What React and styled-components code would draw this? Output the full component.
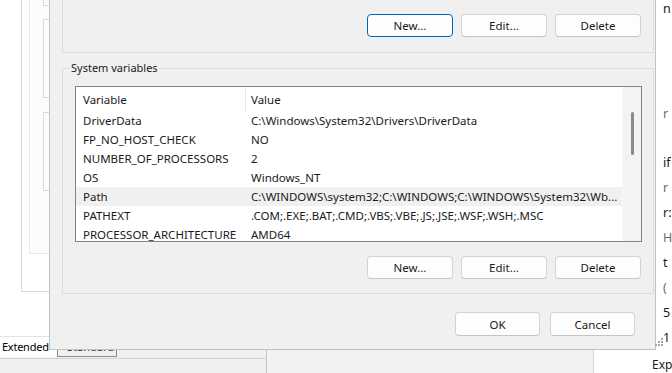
import React from 'react'
import styled, { createGlobalStyle } from 'styled-components'

const GlobalStyle = createGlobalStyle`
  html, body {
    margin: 0;
    padding: 0;
  }
  body {
    font-family: "Noto Sans", "Open Sans", sans-serif;
    font-size: 11px;
    color: #1a1a1a;
    background: #ffffff;
  }
`

const systemVars = [
  { name: 'DriverData', value: 'C:\\Windows\\System32\\Drivers\\DriverData' },
  { name: 'FP_NO_HOST_CHECK', value: 'NO' },
  { name: 'NUMBER_OF_PROCESSORS', value: '2' },
  { name: 'OS', value: 'Windows_NT' },
  { name: 'Path', value: 'C:\\WINDOWS\\system32;C:\\WINDOWS;C:\\WINDOWS\\System32\\Wb...', selected: true },
  { name: 'PATHEXT', value: '.COM;.EXE;.BAT;.CMD;.VBS;.VBE;.JS;.JSE;.WSF;.WSH;.MSC' },
  { name: 'PROCESSOR_ARCHITECTURE', value: 'AMD64' },
]

// bits of the window behind that peek out on the right
const sideBits = [
  { text: 'n', mt: -4 },
  { text: 'r', mt: 80, dim: true },
  { sep: true, mt: 17 },
  { text: 'if', mt: 7 },
  { text: 'r', dim: true },
  { text: 'r:' },
  { text: 'H', dim: true },
  { text: 't' },
  { text: '(', dim: true },
  { text: '5' },
  { text: '1' },
]

function App() {
  return (
    <>
      <GlobalStyle />
      <Desktop>
        <BackWindow>
          <Tree>
            <TreeOuter>
              <TreeInner>
                <Stub $first />
                <Stub $mt={13} />
                <Stub $mt={14} />
              </TreeInner>
            </TreeOuter>
          </Tree>

          <Side>
            {sideBits.map((b, i) =>
              b.sep ? (
                <SideSep key={i} $mt={b.mt} />
              ) : (
                <SideText key={i} $mt={b.mt || 0} $dim={b.dim}>
                  {b.text}
                </SideText>
              )
            )}
          </Side>

          <Tabs>
            <Tab $active>Extended</Tab>
            <Tab>Standard</Tab>
          </Tabs>
          <Status />
          <Mid />
          <ExpPane>Exp</ExpPane>
        </BackWindow>

        <Dialog>
          <TopGroup>
            <ButtonRow>
              <Button $primary>New...</Button>
              <Button>Edit...</Button>
              <Button>Delete</Button>
            </ButtonRow>
          </TopGroup>

          <Group>
            <Legend>System variables</Legend>
            <ListView>
              <Table>
                <HeaderRow>
                  <HeadCell>Variable</HeadCell>
                  <HeadCell $second>Value</HeadCell>
                </HeaderRow>
                {systemVars.map((v) => (
                  <Row key={v.name} $selected={v.selected}>
                    <Cell>{v.name}</Cell>
                    <Cell $second>{v.value}</Cell>
                  </Row>
                ))}
              </Table>
              <ScrollTrack>
                <Thumb />
              </ScrollTrack>
            </ListView>
            <ButtonRow $mt={14}>
              <Button>New...</Button>
              <Button>Edit...</Button>
              <Button>Delete</Button>
            </ButtonRow>
          </Group>

          <DialogFooter>
            <Button $tall>OK</Button>
            <Button $tall>Cancel</Button>
          </DialogFooter>

          <Grip width="9" height="8" viewBox="0 0 9 8">
            <rect x="7" y="0" width="2" height="2" />
            <rect x="4" y="3" width="2" height="2" />
            <rect x="7" y="3" width="2" height="2" />
            <rect x="1" y="6" width="2" height="2" />
            <rect x="4" y="6" width="2" height="2" />
            <rect x="7" y="6" width="2" height="2" />
          </Grip>
        </Dialog>
      </Desktop>
    </>
  )
}

export default App

const Desktop = styled.div`
  position: relative;
  width: 672px;
  height: 373px;
  overflow: hidden;
  background: #ffffff;
`

const BackWindow = styled.div`
  display: grid;
  width: 672px;
  height: 373px;
  grid-template-columns: 49px 217px 327px 63px 16px;
  grid-template-rows: 337px 13px 8px 15px;
  grid-template-areas:
    "tree . . . side"
    "tabs tabs . . side"
    "tabs tabs mid exp exp"
    "status status mid exp exp";
`

const Tree = styled.div`
  grid-area: tree;
  background: #ffffff;
  overflow: hidden;
`

const TreeOuter = styled.div`
  margin-left: 21px;
  height: 291px;
  border-left: 1px solid #d9d9d9;
  border-bottom: 1px solid #d9d9d9;
`

const TreeInner = styled.div`
  margin-left: 7px;
  height: 253px;
  padding-left: 13px;
  border-left: 1px solid #e8e8e8;
  border-bottom: 1px solid #e8e8e8;
  background: #fcfcfc;
  display: flex;
  flex-direction: column;
`

const Stub = styled.div`
  margin-top: ${(p) => (p.$first ? 0 : p.$mt)}px;
  height: ${(p) => (p.$first ? 5 : 77)}px;
  border-left: 1px solid #dadada;
  border-bottom: 1px solid #dadada;
  border-top: ${(p) => (p.$first ? 'none' : '1px solid #dadada')};
`

const Side = styled.div`
  grid-area: side;
  display: flex;
  flex-direction: column;
  padding-left: 7px;
  overflow: hidden;
  background: #ffffff;
`

const SideText = styled.div`
  margin-top: ${(p) => p.$mt}px;
  height: 25px;
  line-height: 25px;
  font-size: 12.5px;
  white-space: nowrap;
  color: ${(p) => (p.$dim ? '#6a6a6a' : '#1a1a1a')};
`

const SideSep = styled.div`
  margin-top: ${(p) => p.$mt}px;
  margin-left: -7px;
  height: 1px;
  background: #e3e3e3;
`

const Tabs = styled.div`
  grid-area: tabs;
  display: flex;
  align-items: flex-start;
  background: #f0f0f0;
  border-top: 1px solid #e3e3e3;
  margin-top: -1px;
`

const Tab = styled.div`
  height: 20px;
  line-height: 20px;
  font-size: 11px;
  white-space: nowrap;
  box-sizing: border-box;
  ${(p) =>
    p.$active
      ? `
    flex: 0 0 58px;
    padding-left: 2px;
    letter-spacing: -0.25px;
    background: #ffffff;
    color: #000000;
    border-right: 1px solid #8c8c8c;
  `
      : `
    flex: 0 0 59px;
    padding-left: 9px;
    color: #333333;
    border-right: 1px solid #8c8c8c;
    border-bottom: 1px solid #8c8c8c;
  `}
`

const Status = styled.div`
  grid-area: status;
  background: #f0f0f0;
  border-top: 1px solid #d4d4d4;
`

const Mid = styled.div`
  grid-area: mid;
  background: #f2f2f2;
  border-left: 1px solid #c6c6c6;
`

const ExpPane = styled.div`
  grid-area: exp;
  background: #ffffff;
  border-left: 1px solid #d4d4d4;
  padding: 7px 0 0 58px;
  line-height: 16px;
  font-size: 12px;
  white-space: nowrap;
  overflow: hidden;
`

const Dialog = styled.div`
  position: absolute;
  left: 49px;
  top: -40px;
  width: 607px;
  height: 390px;
  box-sizing: border-box;
  display: flex;
  flex-direction: column;
  padding: 0 1px 0 12px;
  background: #f0f0f0;
  border: 1px solid #c2c2c2;
  border-top: none;
`

const TopGroup = styled.div`
  padding: 54px 12px 15px 12px;
  border: 1px solid #dcdcdc;
  border-top: none;
`

const Group = styled.div`
  position: relative;
  margin-top: 15px;
  padding: 17px 11px 14px 12px;
  border: 1px solid #dcdcdc;
`

const Legend = styled.div`
  position: absolute;
  top: -9px;
  left: 7px;
  padding: 0 1px;
  line-height: 16px;
  font-size: 11px;
  background: #f0f0f0;
  color: #1a1a1a;
`

const ButtonRow = styled.div`
  display: flex;
  justify-content: flex-end;
  gap: 8px;
  margin-top: ${(p) => p.$mt || 0}px;
  margin-right: ${(p) => (p.$mt ? 1 : 0)}px;
`

const Button = styled.div`
  width: ${(p) => (p.$tall ? 85 : 86)}px;
  height: ${(p) => (p.$tall ? 24 : 23)}px;
  box-sizing: border-box;
  display: flex;
  align-items: center;
  justify-content: center;
  border-radius: 4px;
  background: #fdfdfd;
  border: 1px solid ${(p) => (p.$primary ? '#0067c0' : '#d3d3d3')};
  border-bottom-color: ${(p) => (p.$primary ? '#0067c0' : '#c4c4c4')};
  font-size: 11.5px;
  color: #1a1a1a;
`

const ListView = styled.div`
  height: 156px;
  box-sizing: border-box;
  display: flex;
  background: #ffffff;
  border: 1px solid #838383;
  overflow: hidden;
  font-size: 11.5px;
`

const Table = styled.div`
  flex: 1;
  min-width: 0;
  display: flex;
  flex-direction: column;
`

const HeaderRow = styled.div`
  display: grid;
  grid-template-columns: 169px 1fr;
  height: 24px;
  flex-shrink: 0;
`

const HeadCell = styled.div`
  display: flex;
  align-items: center;
  padding-left: ${(p) => (p.$second ? 5 : 7)}px;
  border-left: ${(p) => (p.$second ? '1px solid #e5e5e5' : 'none')};
  white-space: nowrap;
`

const Row = styled.div`
  display: grid;
  grid-template-columns: 169px 1fr;
  height: 19px;
  flex-shrink: 0;
  align-items: center;
  background: ${(p) => (p.$selected ? '#f0f0f0' : 'transparent')};
`

const Cell = styled.div`
  padding-left: ${(p) => (p.$second ? 6 : 7)}px;
  white-space: nowrap;
  overflow: hidden;
`

const ScrollTrack = styled.div`
  width: 19px;
  flex-shrink: 0;
  background: #f3f3f3;
  border-left: 1px solid #fafafa;
  box-sizing: border-box;
`

const Thumb = styled.div`
  margin: 25px 0 0 8px;
  width: 3px;
  height: 43px;
  border-radius: 2px;
  background: #8a8a8a;
`

const DialogFooter = styled.div`
  display: flex;
  justify-content: flex-end;
  gap: 10px;
  margin-top: 18px;
  margin-right: 19px;
`

const Grip = styled.svg`
  position: absolute;
  right: -8px;
  bottom: 3px;
  fill: #a8a8a8;
`
